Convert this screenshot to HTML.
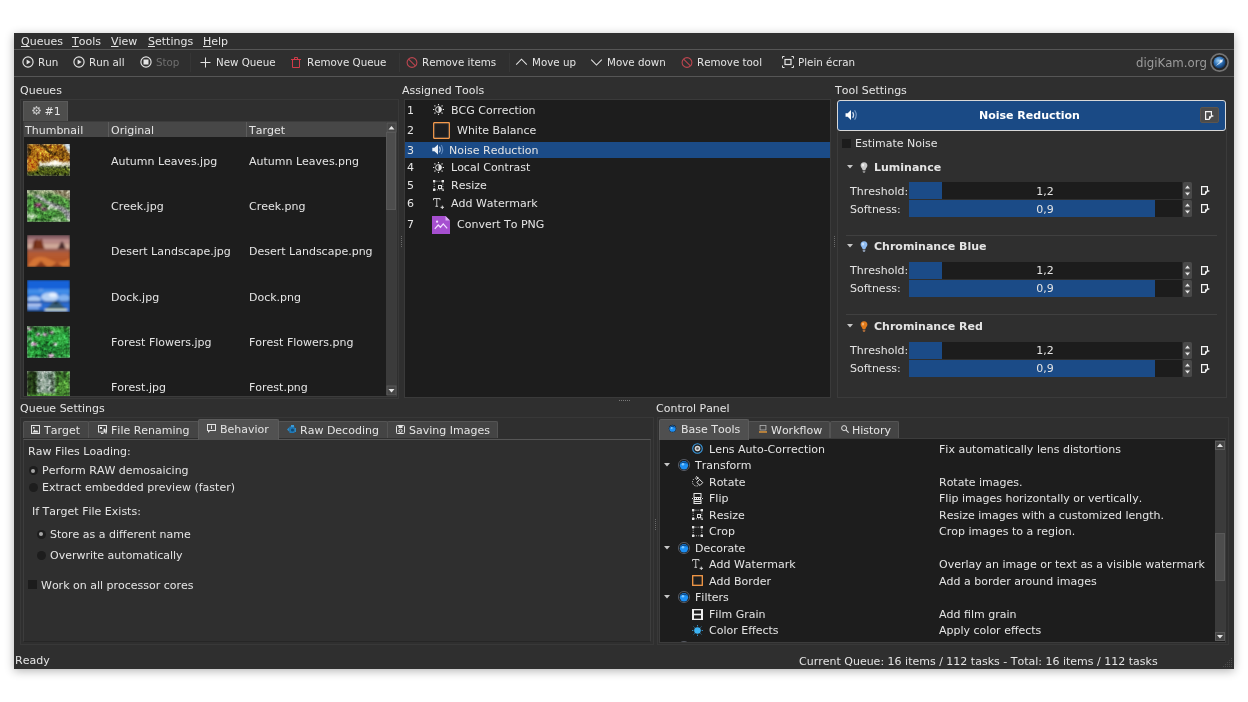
<!DOCTYPE html>
<html lang="en">
<head>
<meta charset="utf-8">
<title>Batch Queue Manager</title>
<style>
*{box-sizing:border-box;margin:0;padding:0}
html,body{width:1248px;height:702px;overflow:hidden;background:#fff}
body{position:relative;font-family:"DejaVu Sans","Liberation Sans",sans-serif;font-size:11px;color:#e4e4e4;line-height:14px;font-kerning:none;font-feature-settings:"kern" 0}
.win *{position:absolute}
.win{position:absolute;left:14px;top:33px;width:1220px;height:636px;background:#2f2f2f;box-shadow:0 2px 9px 0 rgba(0,0,0,.3)}
.t{white-space:nowrap;line-height:14px;height:14px;filter:grayscale(1)}
.t u,.t span,.t b{position:static}
.t u{text-decoration:underline;text-underline-offset:1px}
.tb{font-size:10.3px}
.hl{height:1px;background:#565656}
.b{font-weight:bold}
svg{overflow:visible}
svg *{position:static}
</style>
</head>
<body>
<div class="win" id="win">

<!-- menubar -->
<div class="t" style="left:7px;top:2px;"><u>Q</u>ueues</div>
<div class="t" style="left:58px;top:2px;"><u>T</u>ools</div>
<div class="t" style="left:97px;top:2px;"><u>V</u>iew</div>
<div class="t" style="left:134px;top:2px;"><u>S</u>ettings</div>
<div class="t" style="left:189px;top:2px;"><u>H</u>elp</div>
<div style="left:0px;top:16px;width:1220px;height:1px;background:#565656"></div>
<div style="left:0px;top:43px;width:1220px;height:1px;background:#565656"></div>
<!-- toolbar -->
<svg style="left:8px;top:23px" width="12" height="12" viewBox="0 0 12 12"><circle cx="6" cy="6" r="5.1" fill="none" stroke="#e4e4e4" stroke-width="1.15"/><path d="M4.6 3.4 L8.6 6 L4.6 8.6Z" fill="#e4e4e4"/></svg>
<div class="t tb" style="left:24px;top:22px;">Run</div>
<svg style="left:59px;top:23px" width="12" height="12" viewBox="0 0 12 12"><circle cx="6" cy="6" r="5.1" fill="none" stroke="#e4e4e4" stroke-width="1.15"/><path d="M4.6 3.4 L8.6 6 L4.6 8.6Z" fill="#e4e4e4"/></svg>
<div class="t tb" style="left:75px;top:22px;">Run all</div>
<svg style="left:126px;top:23px" width="12" height="12" viewBox="0 0 12 12"><circle cx="6" cy="6" r="5.1" fill="none" stroke="#e4e4e4" stroke-width="1.15"/><rect x="3.5" y="3.5" width="5" height="5" fill="#e4e4e4"/></svg>
<div class="t tb" style="left:142px;top:22px;color:#6f6f6f">Stop</div>
<svg style="left:185px;top:23px" width="12" height="12" viewBox="0 0 12 12"><path d="M6.5 1.5V11.5M1.5 6.5H11.5" stroke="#e4e4e4" stroke-width="1" fill="none"/></svg>
<div class="t tb" style="left:202px;top:22px;">New Queue</div>
<svg style="left:277px;top:23px" width="12" height="12" viewBox="0 0 12 12"><path d="M0 3.5H10M3.5 3.5V1.5H6.5V3.5M1.5 3.5V11.5H8.5V3.5" stroke="#d23a48" stroke-width="1" fill="none"/></svg>
<div class="t tb" style="left:293px;top:22px;">Remove Queue</div>
<svg style="left:392px;top:23px" width="12" height="12" viewBox="0 0 12 12"><circle cx="6" cy="6.5" r="4.9" fill="none" stroke="#bc4650" stroke-width="1.1"/><path d="M2.6 3.1L9.4 9.9" stroke="#bc4650" stroke-width="1.1"/></svg>
<div class="t tb" style="left:408px;top:22px;">Remove items</div>
<svg style="left:501px;top:23px" width="12" height="12" viewBox="0 0 12 12"><path d="M1.2 8.6L6.5 3.2L11.8 8.6" stroke="#e4e4e4" stroke-width="1.05" fill="none"/></svg>
<div class="t tb" style="left:518px;top:22px;">Move up</div>
<svg style="left:577px;top:23px" width="12" height="12" viewBox="0 0 12 12"><path d="M0.2 3.6L5.5 9L10.8 3.6" stroke="#e4e4e4" stroke-width="1.05" fill="none"/></svg>
<div class="t tb" style="left:593px;top:22px;">Move down</div>
<svg style="left:667px;top:23px" width="12" height="12" viewBox="0 0 12 12"><circle cx="6" cy="6.5" r="4.9" fill="none" stroke="#bc4650" stroke-width="1.1"/><path d="M2.6 3.1L9.4 9.9" stroke="#bc4650" stroke-width="1.1"/></svg>
<div class="t tb" style="left:683px;top:22px;">Remove tool</div>
<svg style="left:768px;top:23px" width="12" height="12" viewBox="0 0 12 12"><rect x="3" y="3.5" width="6" height="5" fill="none" stroke="#e4e4e4" stroke-width="1.2"/><path d="M0.5 2.5V0.5H2.5M9.5 0.5H11.5V2.5M0.5 9.5V11.5H2.5M9.5 11.5H11.5V9.5" stroke="#e4e4e4" stroke-width="1" fill="none"/></svg>
<div class="t tb" style="left:784px;top:22px;">Plein écran</div>
<div style="left:176px;top:20px;width:1px;height:19px;background:#363636"></div>
<div style="left:385px;top:20px;width:1px;height:19px;background:#363636"></div>
<div style="left:495px;top:20px;width:1px;height:19px;background:#363636"></div>
<div class="t" style="left:1122px;top:23px;font-size:11.75px;color:#9a9a9a">digiKam.org</div>
<svg style="left:1196px;top:20px" width="19" height="19" viewBox="0 0 19 19"><defs><radialGradient id="lg" cx="40%" cy="35%" r="70%"><stop offset="0" stop-color="#9fd0f5"/><stop offset="0.5" stop-color="#2f72b8"/><stop offset="1" stop-color="#0c2c55"/></radialGradient></defs><circle cx="9.5" cy="9.5" r="8.6" fill="#252525" stroke="#747474" stroke-width="1.6"/><circle cx="9.5" cy="9.5" r="6" fill="url(#lg)"/><path d="M5.5 13 Q9.5 9.5 13.5 5.5 Q11.5 10.5 5.5 13Z" fill="#eaf4ff" opacity=".9"/><circle cx="11" cy="8" r="1.6" fill="#fff" opacity=".8"/></svg>
<!-- queues -->
<div class="t" style="left:6px;top:51px;">Queues</div>
<div style="left:6px;top:66px;width:379px;height:300px;border:1px solid #393939"></div>
<div style="left:9px;top:68px;width:45px;height:21px;background:#4e4e4d;border:1px solid #5a5a5a;border-bottom:none"></div>
<svg style="left:17.5px;top:73px" width="9" height="9" viewBox="0 0 9 9"><circle cx="4.5" cy="4.5" r="2.8" fill="none" stroke="#e0e0e0" stroke-width="1"/><path d="M7.40 4.50L8.70 4.50M6.55 6.55L7.47 7.47M4.50 7.40L4.50 8.70M2.45 6.55L1.53 7.47M1.60 4.50L0.30 4.50M2.45 2.45L1.53 1.53M4.50 1.60L4.50 0.30M6.55 2.45L7.47 1.53" stroke="#e0e0e0" stroke-width="1.3" fill="none"/><path d="M3.8 3.3L6 4.5L3.8 5.7Z" fill="#e0e0e0"/></svg>
<div class="t" style="left:30.5px;top:72px;">#1</div>
<div style="left:9px;top:88px;width:374px;height:276px;background:#1d1d1d;border:1px solid #3c3c3c"></div>
<div style="left:10px;top:89px;width:362px;height:15px;background:#474747"></div>
<div style="left:94px;top:89px;width:1px;height:15px;background:#5c5c5c"></div>
<div style="left:232px;top:89px;width:1px;height:15px;background:#5c5c5c"></div>
<div class="t" style="left:11px;top:91px;">Thumbnail</div>
<div class="t" style="left:97px;top:91px;">Original</div>
<div class="t" style="left:235px;top:91px;">Target</div>
<div style="left:372px;top:89px;width:10px;height:273px;background:#3b3b3b"></div>
<div style="left:372px;top:99px;width:10px;height:78px;background:#4d4d4d;border:1px solid #585858"></div>
<svg style="left:372.5px;top:89.5px" width="9" height="9" viewBox="0 0 9 9"><rect x="0" y="0" width="9" height="9" fill="#454545" stroke="#5a5a5a" stroke-width="1"/><path d="M1.5 6.5L4.5 3L7.5 6.5Z" fill="#e4e4e4"/></svg>
<svg style="left:372.5px;top:352.5px" width="9" height="9" viewBox="0 0 9 9"><rect x="0" y="0" width="9" height="9" fill="#454545" stroke="#5a5a5a" stroke-width="1"/><path d="M1.5 3L4.5 6.5L7.5 3Z" fill="#e4e4e4"/></svg>
<svg width="0" height="0" style="left:0;top:0"><defs>
<filter id="tx" x="0" y="0" width="1" height="1" color-interpolation-filters="sRGB"><feGaussianBlur in="SourceGraphic" stdDeviation="0.9" result="b"/><feTurbulence type="fractalNoise" baseFrequency="0.4" numOctaves="2" seed="7" result="n"/><feColorMatrix in="n" type="matrix" values="0.5 0.5 0 0 0 0.5 0.5 0 0 0 0.5 0.5 0 0 0 0 0 0 0 1" result="g"/><feComponentTransfer in="g" result="g2"><feFuncR type="linear" slope="1.5" intercept="-0.28"/><feFuncG type="linear" slope="1.5" intercept="-0.28"/><feFuncB type="linear" slope="1.5" intercept="-0.28"/></feComponentTransfer><feBlend in="g2" in2="b" mode="overlay"/></filter>
<filter id="tx2" x="0" y="0" width="1" height="1" color-interpolation-filters="sRGB"><feGaussianBlur in="SourceGraphic" stdDeviation="0.8" result="b"/><feTurbulence type="fractalNoise" baseFrequency="0.28" numOctaves="2" seed="11" result="n"/><feColorMatrix in="n" type="matrix" values="0.5 0.5 0 0 0 0.5 0.5 0 0 0 0.5 0.5 0 0 0 0 0 0 0 1" result="g"/><feComponentTransfer in="g" result="g2"><feFuncR type="linear" slope="1.4" intercept="-0.2"/><feFuncG type="linear" slope="1.4" intercept="-0.2"/><feFuncB type="linear" slope="1.4" intercept="-0.2"/></feComponentTransfer><feBlend in="g2" in2="b" mode="overlay"/></filter>
<filter id="bl" x="0" y="0" width="1" height="1"><feGaussianBlur stdDeviation="0.8"/></filter>
</defs></svg>
<div style="left:10px;top:105px;width:361px;height:258px;overflow:hidden">
<svg style="left:3px;top:6px;overflow:hidden" width="43" height="32" viewBox="0 0 43 32"><g filter="url(#tx)"><rect width="43" height="32" fill="#9a6214"/><rect x="34" y="0" width="9" height="14" fill="#cfe0ee"/><path d="M0 0H36L40 6L43 10V16H30L22 12L10 18L0 16Z" fill="#a86c16"/><path d="M8 4L18 2L28 7L22 12L12 10Z" fill="#d4962a"/><path d="M26 8L38 5L43 12L36 16Z" fill="#8a5a14"/><rect x="12" y="18" width="31" height="4" fill="#e8e4d4"/><ellipse cx="28" cy="19" rx="6" ry="3" fill="#fffdf0"/><rect x="10" y="22" width="33" height="2.5" fill="#4a5a30"/><rect x="0" y="24" width="43" height="8" fill="#5a6a1c"/><rect x="0" y="29" width="43" height="3" fill="#3c4a14"/><path d="M0 14L9 15L11 26L0 28Z" fill="#c47a18"/><path d="M0 0L4 6L2 12L0 12Z" fill="#3a2408"/><path d="M12 0Q18 2 21 6T28 10" stroke="#1e1206" stroke-width="2" fill="none"/></g></svg>
<div class="t" style="left:87px;top:17px">Autumn Leaves.jpg</div>
<div class="t" style="left:225px;top:17px">Autumn Leaves.png</div>
<svg style="left:3px;top:52px;overflow:hidden" width="43" height="32" viewBox="0 0 43 32"><g filter="url(#tx2)"><rect width="43" height="32" fill="#47853a"/><rect width="43" height="5" fill="#7f9668"/><path d="M24 0H43V10L34 6Z" fill="#978f72"/><path d="M6 5Q12 4 18 9T32 15Q40 18 43 22V30H40Q38 22 28 18T12 9Q8 8 6 5Z" fill="#a4a4a8"/><path d="M22 12Q30 14 36 20T42 28" stroke="#7a7a80" stroke-width="1.5" fill="none"/><path d="M30 12L43 16V22Q38 16 30 12Z" fill="#3f7a34"/><path d="M0 10Q10 10 22 18T34 32H0Z" fill="#438a38"/><ellipse cx="11" cy="15" rx="4" ry="2" fill="#a8508c"/><ellipse cx="17" cy="19" rx="3" ry="1.5" fill="#9a4a80"/><ellipse cx="24" cy="18" rx="4" ry="1.8" fill="#b8d0b0"/><ellipse cx="5" cy="26" rx="5" ry="3" fill="#a8cc9c"/><ellipse cx="30" cy="29" rx="5" ry="2" fill="#98c08c"/></g></svg>
<div class="t" style="left:87px;top:62px">Creek.jpg</div>
<div class="t" style="left:225px;top:62px">Creek.png</div>
<svg style="left:3px;top:97px;overflow:hidden" width="43" height="32" viewBox="0 0 43 32"><g filter="url(#bl)"><rect width="43" height="32" fill="#b4562a"/><rect width="43" height="14" fill="#b98a84"/><rect width="43" height="4" fill="#8a6268"/><rect y="4" width="43" height="3" fill="#b88a88"/><rect y="9" width="43" height="4" fill="#cfa898"/><path d="M5 15L6 9L7 5H9V4H11V5H13V4H15L16 9L18 15Z" fill="#7a341c"/><path d="M7 5H9V12H7Z" fill="#6a2a18"/><path d="M30 15L33 9L35 6L37 9L39 15Z" fill="#4a2a2c"/><rect y="14" width="43" height="3" fill="#9a5a4a"/><rect y="17" width="43" height="5" fill="#b45a30"/><path d="M0 32L6 24Q14 19 24 25T43 23V32Z" fill="#d47436"/><path d="M8 32L14 26L20 32Z" fill="#8a3a1c"/><path d="M24 32L30 27L36 32Z" fill="#a04a24"/></g></svg>
<div class="t" style="left:87px;top:107px">Desert Landscape.jpg</div>
<div class="t" style="left:225px;top:107px">Desert Landscape.png</div>
<svg style="left:3px;top:142px;overflow:hidden" width="43" height="32" viewBox="0 0 43 32"><g filter="url(#bl)"><rect width="43" height="32" fill="#2874d8"/><rect width="43" height="9" fill="#1462d8"/><rect y="9" width="43" height="5" fill="#3f8ce8"/><ellipse cx="14" cy="10" rx="2.5" ry="1.5" fill="#5f9ae8"/><ellipse cx="23" cy="17" rx="9" ry="4.5" fill="#b4d0f4"/><ellipse cx="26" cy="15" rx="4" ry="2.5" fill="#e4f0ff"/><ellipse cx="7" cy="19" rx="7" ry="3" fill="#a8c8f2"/><ellipse cx="37" cy="18" rx="6" ry="3.5" fill="#7fb0ee"/><rect y="21" width="43" height="2" fill="#2a5aa8"/><rect y="23" width="43" height="9" fill="#2a6cd0"/><rect x="0" y="24" width="14" height="2" fill="#c4d8f8"/><rect x="0" y="27" width="12" height="2" fill="#8ab4ee"/><path d="M27 21L18 30H40L31 21Z" fill="#345a70"/><path d="M28 21H30L31 24H27Z" fill="#1a2a38"/><rect x="18" y="29" width="22" height="1.8" fill="#dfeed8"/><path d="M0 32V30H16L18 32Z" fill="#1a3a6a"/></g></svg>
<div class="t" style="left:87px;top:153px">Dock.jpg</div>
<div class="t" style="left:225px;top:153px">Dock.png</div>
<svg style="left:3px;top:188px;overflow:hidden" width="43" height="32" viewBox="0 0 43 32"><g filter="url(#tx2)"><rect width="43" height="32" fill="#238a34"/><rect width="43" height="5" fill="#256428"/><ellipse cx="30" cy="4" rx="8" ry="3" fill="#3fae48"/><ellipse cx="12" cy="12" rx="7" ry="4" fill="#2fa840"/><ellipse cx="32" cy="14" rx="8" ry="6" fill="#36b048"/><ellipse cx="20" cy="23" rx="8" ry="5" fill="#1f7a30"/><ellipse cx="38" cy="26" rx="6" ry="5" fill="#2a8a38"/><ellipse cx="5" cy="27" rx="5" ry="4" fill="#2a9a3a"/><ellipse cx="2.5" cy="3" rx="2" ry="1.3" fill="#e890d8"/><ellipse cx="11" cy="8.5" rx="2.2" ry="1.4" fill="#e494d4"/><ellipse cx="18" cy="8.5" rx="2.4" ry="1.4" fill="#e88cd8"/><ellipse cx="24.5" cy="6.5" rx="2" ry="1.6" fill="#d884c8"/><ellipse cx="7" cy="18" rx="3.2" ry="1.7" fill="#f0a0e0"/><ellipse cx="3" cy="13" rx="1.5" ry="1" fill="#d890c8"/><ellipse cx="28" cy="18" rx="2" ry="1.2" fill="#e090d0"/><ellipse cx="24" cy="29.5" rx="3.2" ry="1.7" fill="#f09ce0"/></g></svg>
<div class="t" style="left:87px;top:198px">Forest Flowers.jpg</div>
<div class="t" style="left:225px;top:198px">Forest Flowers.png</div>
<svg style="left:3px;top:233px;overflow:hidden" width="43" height="32" viewBox="0 0 43 32"><g filter="url(#tx2)"><rect width="43" height="32" fill="#3f7030"/><rect x="9" y="0" width="20" height="24" fill="#8fa698"/><rect x="13" y="8" width="9" height="12" fill="#b4c6ba"/><rect x="0" y="0" width="10" height="32" fill="#2c4c1e"/><rect x="1" y="0" width="2" height="32" fill="#1a2a10"/><rect x="5" y="0" width="2.5" height="32" fill="#15220c"/><rect x="12" y="0" width="1.5" height="24" fill="#56685a"/><rect x="16" y="0" width="1.2" height="22" fill="#7a8a7c"/><rect x="20" y="0" width="1.6" height="24" fill="#62746a"/><rect x="24" y="0" width="2" height="25" fill="#3a4c38"/><rect x="28" y="0" width="15" height="32" fill="#3f7c2e"/><rect x="30" y="0" width="2" height="30" fill="#24401c"/><rect x="36" y="0" width="2" height="32" fill="#2a4a20"/><ellipse cx="36" cy="16" rx="6" ry="6" fill="#4f9436"/><path d="M0 24Q20 20 43 25V32H0Z" fill="#4e9a34"/><path d="M14 32Q20 24 24 32Z" fill="#7a6a3a"/></g></svg>
<div class="t" style="left:87px;top:243px">Forest.jpg</div>
<div class="t" style="left:225px;top:243px">Forest.png</div>
</div>
<!-- assigned tools -->
<div class="t" style="left:388px;top:51px;">Assigned Tools</div>
<div style="left:390px;top:66px;width:427px;height:299px;background:#1d1d1d;border:1px solid #3a3a3a"></div>
<div style="left:391px;top:109px;width:425px;height:16px;background:#1b4b87"></div>
<div class="t" style="left:393px;top:71px;">1</div>
<svg style="left:419px;top:71px" width="11" height="11" viewBox="0 0 11 11"><circle cx="5.5" cy="5.5" r="2.9" fill="none" stroke="#e4e4e4" stroke-width="1"/><path d="M5.5 2.6A2.9 2.9 0 0 1 5.5 8.4Z" fill="#e4e4e4"/><path d="M5.5 0V1.3M5.5 9.7V11M0 5.5H1.3M9.7 5.5H11M1.5 1.5L2.4 2.4M8.6 8.6L9.5 9.5M1.5 9.5L2.4 8.6M8.6 2.4L9.5 1.5" stroke="#e4e4e4" stroke-width="1.1"/></svg>
<div class="t" style="left:437px;top:71px;">BCG Correction</div>
<div class="t" style="left:393px;top:91px;">2</div>
<svg style="left:419px;top:89px" width="17" height="17" viewBox="0 0 16 16"><rect x="0.7" y="0.7" width="14.6" height="14.6" rx=".4" fill="#1e1f21" stroke="#f59a4c" stroke-width="1.3"/><rect x="1.7" y="1.7" width="12.6" height="12.6" fill="none" stroke="#3c3c3c" stroke-width=".6"/></svg>
<div class="t" style="left:443px;top:91px;">White Balance</div>
<div class="t" style="left:393px;top:111px;">3</div>
<svg style="left:418px;top:111px" width="11" height="11" viewBox="0 0 11 11"><path d="M0.3 3.8H2.4L6 0.6V10.4L2.4 7.2H0.3Z" fill="#e8eef6"/><path d="M7.3 2.6Q9.2 5.5 7.3 8.4" fill="none" stroke="#a8c0de" stroke-width="1.2"/><path d="M9.2 1Q12.2 5.5 9.2 10" fill="none" stroke="#5f88bc" stroke-width="1.1"/></svg>
<div class="t" style="left:435px;top:111px;">Noise Reduction</div>
<div class="t" style="left:393px;top:128px;">4</div>
<svg style="left:419px;top:129px" width="11" height="11" viewBox="0 0 11 11"><circle cx="5.5" cy="5.5" r="2.9" fill="none" stroke="#e4e4e4" stroke-width="1"/><path d="M5.5 2.6A2.9 2.9 0 0 1 5.5 8.4Z" fill="#e4e4e4"/><path d="M5.5 0V1.3M5.5 9.7V11M0 5.5H1.3M9.7 5.5H11M1.5 1.5L2.4 2.4M8.6 8.6L9.5 9.5M1.5 9.5L2.4 8.6M8.6 2.4L9.5 1.5" stroke="#e4e4e4" stroke-width="1.1"/></svg>
<div class="t" style="left:437px;top:128px;">Local Contrast</div>
<div class="t" style="left:393px;top:146px;">5</div>
<svg style="left:419px;top:147px" width="11" height="11" viewBox="0 0 11 11"><path d="M1.2 1.2H9.8V9.8H1.2Z" fill="none" stroke="#bdbdbd" stroke-width=".9" stroke-dasharray="1.1 1.1"/><rect x="0" y="0" width="2.3" height="2.3" fill="#e4e4e4"/><rect x="8.7" y="0" width="2.3" height="2.3" fill="#e4e4e4"/><rect x="0" y="8.7" width="2.3" height="2.3" fill="#e4e4e4"/><rect x="5.5" y="5.5" width="3" height="3" fill="none" stroke="#e4e4e4" stroke-width="1"/><rect x="9.3" y="9.3" width="1.7" height="1.7" fill="#bdbdbd"/></svg>
<div class="t" style="left:437px;top:146px;">Resize</div>
<div class="t" style="left:393px;top:164px;">6</div>
<svg style="left:419px;top:165px" width="11" height="11" viewBox="0 0 11 11"><path d="M0.5 2.2V0.5H7V2.2M3.75 0.5V8.3M2.4 8.3H5.1" fill="none" stroke="#dcdcdc" stroke-width=".9"/><path d="M9.3 7.6V11M7.6 9.3H11" stroke="#dcdcdc" stroke-width="1"/></svg>
<div class="t" style="left:437px;top:164px;">Add Watermark</div>
<div class="t" style="left:393px;top:185px;">7</div>
<svg style="left:418px;top:183px" width="18" height="18" viewBox="0 0 16 16"><path d="M0 0H12L16 4V16H0Z" fill="#a64fd0"/><path d="M12 0L16 4H12Z" fill="#d9b0f0"/><path d="M2.5 11.5L5.5 8L7.5 10L10 7L13.5 11" fill="none" stroke="#f0dcff" stroke-width="1.1"/><circle cx="4.5" cy="5" r="1" fill="#f0dcff"/></svg>
<div class="t" style="left:443px;top:185px;">Convert To PNG</div>
<div style="left:387px;top:203px;width:1px;height:12px;background:repeating-linear-gradient(#6a6a6a 0 1px,transparent 1px 2px)"></div>
<div style="left:820px;top:203px;width:1px;height:12px;background:repeating-linear-gradient(#6a6a6a 0 1px,transparent 1px 2px)"></div>
<div style="left:605px;top:367px;width:12px;height:1px;background:repeating-linear-gradient(90deg,#7a7a7a 0 1px,transparent 1px 2px)"></div>
<div style="left:641px;top:486px;width:1px;height:12px;background:repeating-linear-gradient(#6a6a6a 0 1px,transparent 1px 2px)"></div>
<!-- tool settings -->
<div class="t" style="left:821px;top:51px;">Tool Settings</div>
<div style="left:823px;top:95px;width:390px;height:270px;border:1px solid #3b3b3b;border-top:none"></div>
<div style="left:823px;top:67px;width:389px;height:30.5px;background:#1a4a85;border:1px solid #d8d8d8;border-radius:3px"></div>
<svg style="left:831px;top:76px" width="12" height="12" viewBox="0 0 11 11"><path d="M0.5 4H2.5L5.5 1V10L2.5 7H0.5Z" fill="#ffffff"/><path d="M7 2.8Q8.8 5.5 7 8.2" fill="none" stroke="#d0dcec" stroke-width="1.1"/><path d="M8.8 1.2Q11.8 5.5 8.8 9.8" fill="none" stroke="#7f9fc8" stroke-width="1"/></svg>
<div class="t" style="left:965px;top:76px;font-weight:bold;color:#fff">Noise Reduction</div>
<div style="left:1186px;top:74px;width:19px;height:16px;background:#4b4b4b;border:1px solid #5c554e;border-radius:2px"></div>
<svg style="left:1191px;top:78px" width="9" height="9" viewBox="0 0 9 9"><path d="M0.6 0.6H6.4V5.2L4 8.4H0.6Z" fill="none" stroke="#f4f4f4" stroke-width="1.2"/><path d="M4 8.4L6.4 5.2H4Z" fill="#f4f4f4"/><path d="M7 4L9 5L7 6Z" fill="#f4f4f4"/></svg>
<div style="left:828px;top:106px;width:9px;height:9px;background:#1c1c1c"></div>
<div class="t" style="left:841px;top:104px;">Estimate Noise</div>
<svg style="left:833px;top:132px" width="6" height="4" viewBox="0 0 6 4"><path d="M0 0H6L3 3.5Z" fill="#c8c8c8"/></svg>
<svg style="left:846px;top:129px" width="8" height="11" viewBox="0 0 8 11"><path d="M4 0.3C1.8 0.3 0.6 1.8 0.6 3.6C0.6 5.4 2.2 6.4 2.6 8H5.4C5.8 6.4 7.4 5.4 7.4 3.6C7.4 1.8 6.2 0.3 4 0.3Z" fill="#c8c8c8"/><path d="M2.7 8.4H5.3V10L4.6 11H3.4L2.7 10Z" fill="#8a8a8a"/><ellipse cx="3" cy="3" rx="1.2" ry="1.6" fill="#ffffff" opacity=".7"/></svg>
<div class="t" style="left:860px;top:128px;font-weight:bold">Luminance</div>
<div class="t" style="left:836px;top:152px;">Threshold:</div>
<div style="left:895px;top:149px;width:273px;height:17px;background:#1c1c1c"></div>
<div style="left:895px;top:149px;width:33px;height:17px;background:#1b4b87"></div>
<div class="t" style="left:1022px;top:152px;width:18px;text-align:center">1,2</div>
<svg style="left:1169px;top:149px" width="9" height="17" viewBox="0 0 9 17"><rect x="0" y="0" width="9" height="17" rx="1.5" fill="#4a4a4a"/><path d="M2 6.5L4.5 3.5L7 6.5Z" fill="#e4e4e4"/><path d="M2 10.5L4.5 13.5L7 10.5Z" fill="#e4e4e4"/><rect x="1.5" y="8" width="6" height="1" fill="#3a3a3a"/></svg>
<svg style="left:1187px;top:153px" width="9" height="9" viewBox="0 0 9 9"><path d="M0.6 0.6H6.4V5.2L4 8.4H0.6Z" fill="none" stroke="#f4f4f4" stroke-width="1.2"/><path d="M4 8.4L6.4 5.2H4Z" fill="#f4f4f4"/><path d="M7 4L9 5L7 6Z" fill="#f4f4f4"/></svg>
<div class="t" style="left:836px;top:170px;">Softness:</div>
<div style="left:895px;top:167px;width:273px;height:17px;background:#1c1c1c"></div>
<div style="left:895px;top:167px;width:246px;height:17px;background:#1b4b87"></div>
<div class="t" style="left:1022px;top:170px;width:18px;text-align:center">0,9</div>
<svg style="left:1169px;top:167px" width="9" height="17" viewBox="0 0 9 17"><rect x="0" y="0" width="9" height="17" rx="1.5" fill="#4a4a4a"/><path d="M2 6.5L4.5 3.5L7 6.5Z" fill="#e4e4e4"/><path d="M2 10.5L4.5 13.5L7 10.5Z" fill="#e4e4e4"/><rect x="1.5" y="8" width="6" height="1" fill="#3a3a3a"/></svg>
<svg style="left:1187px;top:171px" width="9" height="9" viewBox="0 0 9 9"><path d="M0.6 0.6H6.4V5.2L4 8.4H0.6Z" fill="none" stroke="#f4f4f4" stroke-width="1.2"/><path d="M4 8.4L6.4 5.2H4Z" fill="#f4f4f4"/><path d="M7 4L9 5L7 6Z" fill="#f4f4f4"/></svg>
<div style="left:832px;top:202px;width:371px;height:1px;background:#404040"></div>
<svg style="left:833px;top:211px" width="6" height="4" viewBox="0 0 6 4"><path d="M0 0H6L3 3.5Z" fill="#c8c8c8"/></svg>
<svg style="left:846px;top:208px" width="8" height="11" viewBox="0 0 8 11"><path d="M4 0.3C1.8 0.3 0.6 1.8 0.6 3.6C0.6 5.4 2.2 6.4 2.6 8H5.4C5.8 6.4 7.4 5.4 7.4 3.6C7.4 1.8 6.2 0.3 4 0.3Z" fill="#8fbcf2"/><path d="M2.7 8.4H5.3V10L4.6 11H3.4L2.7 10Z" fill="#8a9ab0"/><ellipse cx="3" cy="3" rx="1.2" ry="1.6" fill="#e0f0ff" opacity=".7"/></svg>
<div class="t" style="left:860px;top:207px;font-weight:bold">Chrominance Blue</div>
<div class="t" style="left:836px;top:231px;">Threshold:</div>
<div style="left:895px;top:229px;width:273px;height:17px;background:#1c1c1c"></div>
<div style="left:895px;top:229px;width:33px;height:17px;background:#1b4b87"></div>
<div class="t" style="left:1022px;top:231px;width:18px;text-align:center">1,2</div>
<svg style="left:1169px;top:229px" width="9" height="17" viewBox="0 0 9 17"><rect x="0" y="0" width="9" height="17" rx="1.5" fill="#4a4a4a"/><path d="M2 6.5L4.5 3.5L7 6.5Z" fill="#e4e4e4"/><path d="M2 10.5L4.5 13.5L7 10.5Z" fill="#e4e4e4"/><rect x="1.5" y="8" width="6" height="1" fill="#3a3a3a"/></svg>
<svg style="left:1187px;top:233px" width="9" height="9" viewBox="0 0 9 9"><path d="M0.6 0.6H6.4V5.2L4 8.4H0.6Z" fill="none" stroke="#f4f4f4" stroke-width="1.2"/><path d="M4 8.4L6.4 5.2H4Z" fill="#f4f4f4"/><path d="M7 4L9 5L7 6Z" fill="#f4f4f4"/></svg>
<div class="t" style="left:836px;top:249px;">Softness:</div>
<div style="left:895px;top:247px;width:273px;height:17px;background:#1c1c1c"></div>
<div style="left:895px;top:247px;width:246px;height:17px;background:#1b4b87"></div>
<div class="t" style="left:1022px;top:249px;width:18px;text-align:center">0,9</div>
<svg style="left:1169px;top:247px" width="9" height="17" viewBox="0 0 9 17"><rect x="0" y="0" width="9" height="17" rx="1.5" fill="#4a4a4a"/><path d="M2 6.5L4.5 3.5L7 6.5Z" fill="#e4e4e4"/><path d="M2 10.5L4.5 13.5L7 10.5Z" fill="#e4e4e4"/><rect x="1.5" y="8" width="6" height="1" fill="#3a3a3a"/></svg>
<svg style="left:1187px;top:251px" width="9" height="9" viewBox="0 0 9 9"><path d="M0.6 0.6H6.4V5.2L4 8.4H0.6Z" fill="none" stroke="#f4f4f4" stroke-width="1.2"/><path d="M4 8.4L6.4 5.2H4Z" fill="#f4f4f4"/><path d="M7 4L9 5L7 6Z" fill="#f4f4f4"/></svg>
<div style="left:832px;top:281px;width:371px;height:1px;background:#404040"></div>
<svg style="left:833px;top:291px" width="6" height="4" viewBox="0 0 6 4"><path d="M0 0H6L3 3.5Z" fill="#c8c8c8"/></svg>
<svg style="left:846px;top:288px" width="8" height="11" viewBox="0 0 8 11"><path d="M4 0.3C1.8 0.3 0.6 1.8 0.6 3.6C0.6 5.4 2.2 6.4 2.6 8H5.4C5.8 6.4 7.4 5.4 7.4 3.6C7.4 1.8 6.2 0.3 4 0.3Z" fill="#e07a1a"/><path d="M2.7 8.4H5.3V10L4.6 11H3.4L2.7 10Z" fill="#a86a3a"/><ellipse cx="3" cy="3" rx="1.2" ry="1.6" fill="#ffc890" opacity=".7"/></svg>
<div class="t" style="left:860px;top:287px;font-weight:bold">Chrominance Red</div>
<div class="t" style="left:836px;top:311px;">Threshold:</div>
<div style="left:895px;top:309px;width:273px;height:17px;background:#1c1c1c"></div>
<div style="left:895px;top:309px;width:33px;height:17px;background:#1b4b87"></div>
<div class="t" style="left:1022px;top:311px;width:18px;text-align:center">1,2</div>
<svg style="left:1169px;top:309px" width="9" height="17" viewBox="0 0 9 17"><rect x="0" y="0" width="9" height="17" rx="1.5" fill="#4a4a4a"/><path d="M2 6.5L4.5 3.5L7 6.5Z" fill="#e4e4e4"/><path d="M2 10.5L4.5 13.5L7 10.5Z" fill="#e4e4e4"/><rect x="1.5" y="8" width="6" height="1" fill="#3a3a3a"/></svg>
<svg style="left:1187px;top:313px" width="9" height="9" viewBox="0 0 9 9"><path d="M0.6 0.6H6.4V5.2L4 8.4H0.6Z" fill="none" stroke="#f4f4f4" stroke-width="1.2"/><path d="M4 8.4L6.4 5.2H4Z" fill="#f4f4f4"/><path d="M7 4L9 5L7 6Z" fill="#f4f4f4"/></svg>
<div class="t" style="left:836px;top:329px;">Softness:</div>
<div style="left:895px;top:327px;width:273px;height:17px;background:#1c1c1c"></div>
<div style="left:895px;top:327px;width:246px;height:17px;background:#1b4b87"></div>
<div class="t" style="left:1022px;top:329px;width:18px;text-align:center">0,9</div>
<svg style="left:1169px;top:327px" width="9" height="17" viewBox="0 0 9 17"><rect x="0" y="0" width="9" height="17" rx="1.5" fill="#4a4a4a"/><path d="M2 6.5L4.5 3.5L7 6.5Z" fill="#e4e4e4"/><path d="M2 10.5L4.5 13.5L7 10.5Z" fill="#e4e4e4"/><rect x="1.5" y="8" width="6" height="1" fill="#3a3a3a"/></svg>
<svg style="left:1187px;top:331px" width="9" height="9" viewBox="0 0 9 9"><path d="M0.6 0.6H6.4V5.2L4 8.4H0.6Z" fill="none" stroke="#f4f4f4" stroke-width="1.2"/><path d="M4 8.4L6.4 5.2H4Z" fill="#f4f4f4"/><path d="M7 4L9 5L7 6Z" fill="#f4f4f4"/></svg>
<!-- queue settings -->
<div class="t" style="left:6px;top:369px;">Queue Settings</div>
<div style="left:6px;top:384px;width:634px;height:228px;border:1px solid #383838"></div>
<div style="left:9px;top:406px;width:628px;height:203px;border:1px solid #3d3d3d;border-top-color:#565656;border-bottom-color:#262626;background:#2f2f2f"></div>
<div style="left:9px;top:388px;width:66px;height:17px;background:#444;border:1px solid #545454;border-bottom:none;border-radius:2px 2px 0 0"></div>
<svg style="left:17px;top:392px" width="9" height="9" viewBox="0 0 9 9"><rect x="0.5" y="0.5" width="8" height="8" fill="none" stroke="#e4e4e4"/><path d="M1.5 7.5L3.5 4.5L5 6L6 5L7.5 7.5Z" fill="#e4e4e4"/><rect x="2" y="2" width="1.6" height="1.6" fill="#e4e4e4"/></svg>
<div class="t" style="left:30px;top:391px;">Target</div>
<div style="left:74px;top:388px;width:111px;height:17px;background:#444;border:1px solid #545454;border-bottom:none;border-radius:2px 2px 0 0"></div>
<svg style="left:84px;top:392px" width="9" height="9" viewBox="0 0 9 9"><rect x="0.5" y="0.5" width="8" height="6.5" fill="none" stroke="#e4e4e4"/><rect x="2" y="2" width="2" height="2" fill="#e4e4e4"/><path d="M5 5H8V8.8M5.5 8.5H3" stroke="#e4e4e4" fill="none"/><path d="M6.5 3.5V7" stroke="#e4e4e4"/></svg>
<div class="t" style="left:97px;top:391px;">File Renaming</div>
<div style="left:264px;top:388px;width:110px;height:17px;background:#444;border:1px solid #545454;border-bottom:none;border-radius:2px 2px 0 0"></div>
<svg style="left:273px;top:392px" width="9" height="9" viewBox="0 0 9 9"><path d="M0 4.5L2.5 2V7Z" fill="#2a8ac8"/><rect x="2.5" y="1.5" width="5" height="6.5" fill="#1f7ab8"/><rect x="4" y="0" width="3" height="2" fill="#3a9ad8"/><circle cx="5.5" cy="5" r="1.6" fill="#0f4a78"/><rect x="7.5" y="3" width="1.5" height="4" fill="#2a8ac8"/></svg>
<div class="t" style="left:286px;top:391px;">Raw Decoding</div>
<div style="left:373px;top:388px;width:111px;height:17px;background:#444;border:1px solid #545454;border-bottom:none;border-radius:2px 2px 0 0"></div>
<svg style="left:382px;top:392px" width="9" height="9" viewBox="0 0 9 9"><rect x="0.5" y="0.5" width="8" height="8" rx="1" fill="none" stroke="#e4e4e4"/><rect x="2.5" y="0.5" width="4" height="2.5" fill="#e4e4e4"/><circle cx="4.5" cy="5.8" r="1.6" fill="none" stroke="#e4e4e4"/></svg>
<div class="t" style="left:395px;top:391px;">Saving Images</div>
<div style="left:184px;top:386px;width:81px;height:20.5px;background:#515151;border:1px solid #5c5c5c;border-bottom:none;border-radius:2px 2px 0 0"></div>
<svg style="left:193px;top:391px" width="9" height="9" viewBox="0 0 9 9"><rect x="0.5" y="0.5" width="8" height="6" fill="none" stroke="#e4e4e4"/><path d="M4.5 1.5V5" stroke="#e4e4e4"/><path d="M1 6.5V9L3.5 6.5Z" fill="#e4e4e4"/></svg>
<div class="t" style="left:206px;top:390px;">Behavior</div>
<div class="t" style="left:14px;top:412px;">Raw Files Loading:</div>
<div style="left:14.700000000000003px;top:433.0px;width:9px;height:9px;border-radius:50%;background:#1d1d1d"></div>
<div style="left:17.200000000000003px;top:435.5px;width:4px;height:4px;border-radius:50%;background:#a6a6a6"></div>
<div class="t" style="left:28px;top:431px;">Perform RAW demosaicing</div>
<div style="left:14.700000000000003px;top:450.0px;width:9px;height:9px;border-radius:50%;background:#1d1d1d"></div>
<div class="t" style="left:28px;top:448px;">Extract embedded preview (faster)</div>
<div class="t" style="left:18px;top:472px;">If Target File Exists:</div>
<div style="left:22.700000000000003px;top:496.79999999999995px;width:9px;height:9px;border-radius:50%;background:#1d1d1d"></div>
<div style="left:25.200000000000003px;top:499.29999999999995px;width:4px;height:4px;border-radius:50%;background:#a6a6a6"></div>
<div class="t" style="left:36px;top:495px;">Store as a different name</div>
<div style="left:22.700000000000003px;top:518.0px;width:9px;height:9px;border-radius:50%;background:#1d1d1d"></div>
<div class="t" style="left:36px;top:516px;">Overwrite automatically</div>
<div style="left:14px;top:547px;width:9px;height:9px;background:#1c1c1c"></div>
<div class="t" style="left:27px;top:546px;">Work on all processor cores</div>
<!-- control panel -->
<div class="t" style="left:642px;top:369px;">Control Panel</div>
<div style="left:643px;top:384px;width:572px;height:228px;border:1px solid #383838"></div>
<div style="left:645px;top:405px;width:567px;height:205px;background:#1d1d1d;border:1px solid #3c3c3c"></div>
<div style="left:734px;top:388px;width:82px;height:17px;background:#444;border:1px solid #545454;border-bottom:none;border-radius:2px 2px 0 0"></div>
<svg style="left:744.5px;top:392px" width="8" height="8" viewBox="0 0 9 9"><rect x="1.2" y="0.6" width="6.6" height="5" fill="none" stroke="#b4b4b4" stroke-width=".9"/><rect x="0" y="7" width="9" height="1.7" fill="#d8923a"/></svg>
<div class="t" style="left:757px;top:391px;">Workflow</div>
<div style="left:816px;top:388px;width:69px;height:17px;background:#444;border:1px solid #545454;border-bottom:none;border-radius:2px 2px 0 0"></div>
<svg style="left:827px;top:392px" width="8" height="8" viewBox="0 0 9 9"><circle cx="3.5" cy="3.5" r="2.8" fill="none" stroke="#e4e4e4" stroke-width="1.1"/><path d="M5.6 5.6L8.6 8.6" stroke="#e4e4e4" stroke-width="1.2"/></svg>
<div class="t" style="left:838px;top:391px;">History</div>
<div style="left:645px;top:386px;width:89.5px;height:20.5px;background:#4f4f4f;border:1px solid #5c5c5c;border-bottom:none;border-radius:2px 2px 0 0"></div>
<svg style="left:654px;top:391px" width="9" height="9" viewBox="0 0 12 12"><circle cx="6" cy="6" r="5.6" fill="#1b1e22" stroke="#5a5e66" stroke-width=".9"/><circle cx="6" cy="6.2" r="4.2" fill="#1e90f4"/><path d="M2 5.4A4.2 4.2 0 0 1 10 5.4A5 3.4 0 0 0 2 5.4Z" fill="#0c4a8c"/><circle cx="4.9" cy="5.2" r="1.3" fill="#7cc8ff"/></svg>
<div class="t" style="left:667px;top:390px;">Base Tools</div>
<div style="left:1201px;top:407px;width:10px;height:201px;background:#3b3b3b"></div>
<div style="left:1201px;top:500px;width:10px;height:48px;background:#4d4d4d;border:1px solid #585858"></div>
<svg style="left:1201px;top:408px" width="10" height="9" viewBox="0 0 10 9"><rect x="0.5" y="0.5" width="9" height="8" fill="#454545" stroke="#5a5a5a" stroke-width="1"/><path d="M2 6L5 2.5L8 6Z" fill="#e4e4e4"/></svg>
<svg style="left:1201px;top:599px" width="10" height="9" viewBox="0 0 10 9"><rect x="0.5" y="0.5" width="9" height="8" fill="#454545" stroke="#5a5a5a" stroke-width="1"/><path d="M2 3L5 6.5L8 3Z" fill="#e4e4e4"/></svg>
<div style="left:646px;top:406px;width:555px;height:203px;overflow:hidden">
<svg style="left:32px;top:4px" width="11" height="11" viewBox="0 0 11 11"><circle cx="5.5" cy="5.5" r="4.8" fill="none" stroke="#3a9ae0" stroke-width="1.1"/><circle cx="5.5" cy="5.5" r="2.8" fill="#d8d8d8"/><circle cx="5.5" cy="5.5" r="1.3" fill="#555"/></svg>
<div class="t" style="left:49px;top:4px">Lens Auto-Correction</div>
<div class="t" style="left:279px;top:4px">Fix automatically lens distortions</div>
<svg style="left:4px;top:24px" width="6" height="4" viewBox="0 0 6 4"><path d="M0 0H6L3 3.5Z" fill="#c8c8c8"/></svg>
<svg style="left:18px;top:20px" width="12" height="12" viewBox="0 0 12 12"><circle cx="6" cy="6" r="5.6" fill="#1b1e22" stroke="#5a5e66" stroke-width=".9"/><circle cx="6" cy="6.2" r="4.2" fill="#1e90f4"/><path d="M2 5.4A4.2 4.2 0 0 1 10 5.4A5 3.4 0 0 0 2 5.4Z" fill="#0c4a8c"/><circle cx="4.9" cy="5.2" r="1.3" fill="#7cc8ff"/></svg>
<div class="t" style="left:35px;top:20px">Transform</div>
<svg style="left:32px;top:37px" width="11" height="11" viewBox="0 0 11 11"><circle cx="4.5" cy="6" r="4" fill="none" stroke="#e4e4e4" stroke-width="1" stroke-dasharray="1.2 1.2"/><path d="M7.5 3.5L10.8 6.5L8 9.5L4.8 6.5Z" fill="#1d1d1d" stroke="#e4e4e4" stroke-width="1"/><path d="M4 0.5L6.5 2L4 3.5" fill="none" stroke="#e4e4e4" stroke-width="1"/></svg>
<div class="t" style="left:49px;top:37px">Rotate</div>
<div class="t" style="left:279px;top:37px">Rotate images.</div>
<svg style="left:32px;top:54px" width="11" height="11" viewBox="0 0 11 11"><rect x="2" y="0.5" width="7" height="4" fill="none" stroke="#e4e4e4"/><path d="M0 5.5H11" stroke="#e4e4e4" stroke-dasharray="1 1"/><rect x="2" y="6.5" width="7" height="4" fill="none" stroke="#e4e4e4"/><path d="M2 8.5H9" stroke="#e4e4e4"/></svg>
<div class="t" style="left:49px;top:53px">Flip</div>
<div class="t" style="left:279px;top:53px">Flip images horizontally or vertically.</div>
<svg style="left:32px;top:70px" width="11" height="11" viewBox="0 0 11 11"><path d="M1.2 1.2H9.8V9.8H1.2Z" fill="none" stroke="#bdbdbd" stroke-width=".9" stroke-dasharray="1.1 1.1"/><rect x="0" y="0" width="2.3" height="2.3" fill="#e4e4e4"/><rect x="8.7" y="0" width="2.3" height="2.3" fill="#e4e4e4"/><rect x="0" y="8.7" width="2.3" height="2.3" fill="#e4e4e4"/><rect x="5.5" y="5.5" width="3" height="3" fill="none" stroke="#e4e4e4" stroke-width="1"/><rect x="9.3" y="9.3" width="1.7" height="1.7" fill="#bdbdbd"/></svg>
<div class="t" style="left:49px;top:70px">Resize</div>
<div class="t" style="left:279px;top:70px">Resize images with a customized length.</div>
<svg style="left:32px;top:87px" width="11" height="11" viewBox="0 0 11 11"><path d="M1.2 1.2H9.8V9.8H1.2Z" fill="none" stroke="#bdbdbd" stroke-width=".9" stroke-dasharray="1.1 1.1"/><rect x="0" y="0" width="2.3" height="2.3" fill="#e4e4e4"/><rect x="8.7" y="0" width="2.3" height="2.3" fill="#e4e4e4"/><rect x="0" y="8.7" width="2.3" height="2.3" fill="#e4e4e4"/><rect x="8.7" y="8.7" width="2.3" height="2.3" fill="#e4e4e4"/></svg>
<div class="t" style="left:49px;top:86px">Crop</div>
<div class="t" style="left:279px;top:86px">Crop images to a region.</div>
<svg style="left:4px;top:107px" width="6" height="4" viewBox="0 0 6 4"><path d="M0 0H6L3 3.5Z" fill="#c8c8c8"/></svg>
<svg style="left:18px;top:103px" width="12" height="12" viewBox="0 0 12 12"><circle cx="6" cy="6" r="5.6" fill="#1b1e22" stroke="#5a5e66" stroke-width=".9"/><circle cx="6" cy="6.2" r="4.2" fill="#1e90f4"/><path d="M2 5.4A4.2 4.2 0 0 1 10 5.4A5 3.4 0 0 0 2 5.4Z" fill="#0c4a8c"/><circle cx="4.9" cy="5.2" r="1.3" fill="#7cc8ff"/></svg>
<div class="t" style="left:35px;top:103px">Decorate</div>
<svg style="left:32px;top:120px" width="11" height="11" viewBox="0 0 11 11"><path d="M0.5 2.2V0.5H7V2.2M3.75 0.5V8.3M2.4 8.3H5.1" fill="none" stroke="#dcdcdc" stroke-width=".9"/><path d="M9.3 7.6V11M7.6 9.3H11" stroke="#dcdcdc" stroke-width="1"/></svg>
<div class="t" style="left:49px;top:119px">Add Watermark</div>
<div class="t" style="left:279px;top:119px">Overlay an image or text as a visible watermark</div>
<svg style="left:32px;top:136px" width="11" height="11" viewBox="0 0 11 11"><rect x="0.7" y="0.7" width="9.6" height="9.6" fill="#1e1f20" stroke="#f79a48" stroke-width="1.3"/></svg>
<div class="t" style="left:49px;top:136px">Add Border</div>
<div class="t" style="left:279px;top:136px">Add a border around images</div>
<svg style="left:4px;top:156px" width="6" height="4" viewBox="0 0 6 4"><path d="M0 0H6L3 3.5Z" fill="#c8c8c8"/></svg>
<svg style="left:18px;top:152px" width="12" height="12" viewBox="0 0 12 12"><circle cx="6" cy="6" r="5.6" fill="#1b1e22" stroke="#5a5e66" stroke-width=".9"/><circle cx="6" cy="6.2" r="4.2" fill="#1e90f4"/><path d="M2 5.4A4.2 4.2 0 0 1 10 5.4A5 3.4 0 0 0 2 5.4Z" fill="#0c4a8c"/><circle cx="4.9" cy="5.2" r="1.3" fill="#7cc8ff"/></svg>
<div class="t" style="left:35px;top:152px">Filters</div>
<svg style="left:32px;top:170px" width="11" height="11" viewBox="0 0 11 11"><rect x="0" y="0" width="11" height="11" fill="#f0f0f0"/><rect x="2" y="1.3" width="7" height="3.4" fill="#1d1d1d"/><rect x="2" y="6.3" width="7" height="3.4" fill="#1d1d1d"/></svg>
<div class="t" style="left:49px;top:169px">Film Grain</div>
<div class="t" style="left:279px;top:169px">Add film grain</div>
<svg style="left:32px;top:186px" width="11" height="11" viewBox="0 0 11 11"><circle cx="5.5" cy="5.5" r="3.3" fill="#3db4f4"/><path d="M5.5 0.2V1.3M5.5 9.7V10.8M0.2 5.5H1.3M9.7 5.5H10.8M1.7 1.7L2.4 2.4M8.6 8.6L9.3 9.3M1.7 9.3L2.4 8.6M8.6 2.4L9.3 1.7" stroke="#3aa4e4" stroke-width="1"/></svg>
<div class="t" style="left:49px;top:185px">Color Effects</div>
<div class="t" style="left:279px;top:185px">Apply color effects</div>
<svg style="left:4px;top:206px" width="6" height="4" viewBox="0 0 6 4"><path d="M0 0H6L3 3.5Z" fill="#c8c8c8"/></svg>
<svg style="left:18px;top:202px" width="12" height="12" viewBox="0 0 12 12"><circle cx="6" cy="6" r="5.6" fill="#1b1e22" stroke="#5a5e66" stroke-width=".9"/><circle cx="6" cy="6.2" r="4.2" fill="#1e90f4"/><path d="M2 5.4A4.2 4.2 0 0 1 10 5.4A5 3.4 0 0 0 2 5.4Z" fill="#0c4a8c"/><circle cx="4.9" cy="5.2" r="1.3" fill="#7cc8ff"/></svg>
</div>
<svg style="left:1208px;top:624px" width="11" height="11" viewBox="0 0 11 11"><path d="M11 0V11H0Z" fill="none"/><g fill="#4a4a4a"><rect x="9" y="1" width="1" height="1"/><rect x="7" y="3" width="1" height="1"/><rect x="9" y="3" width="1" height="1"/><rect x="5" y="5" width="1" height="1"/><rect x="7" y="5" width="1" height="1"/><rect x="9" y="5" width="1" height="1"/><rect x="3" y="7" width="1" height="1"/><rect x="5" y="7" width="1" height="1"/><rect x="7" y="7" width="1" height="1"/><rect x="9" y="7" width="1" height="1"/><rect x="1" y="9" width="1" height="1"/><rect x="3" y="9" width="1" height="1"/><rect x="5" y="9" width="1" height="1"/><rect x="7" y="9" width="1" height="1"/><rect x="9" y="9" width="1" height="1"/></g></svg>
<!-- status -->
<div class="t" style="left:1px;top:621px;">Ready</div>
<div class="t" style="left:785px;top:622px;">Current Queue: 16 items / 112 tasks - Total: 16 items / 112 tasks</div>
</div>
</body>
</html>
